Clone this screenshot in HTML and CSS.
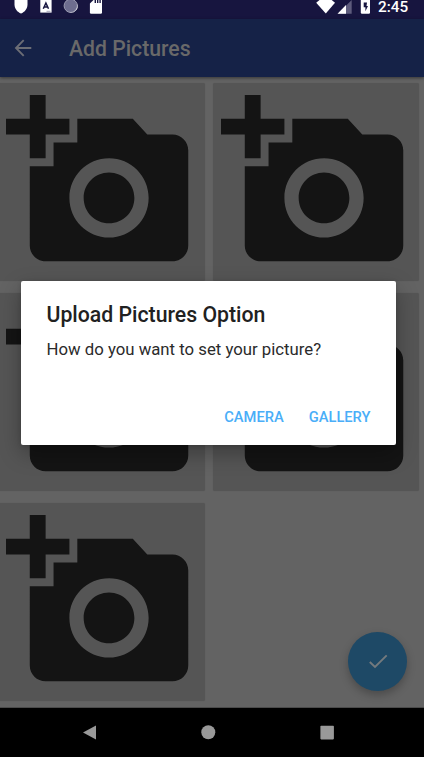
FILE: index.html
```html
<!DOCTYPE html>
<html lang="en">
<head>
<meta charset="utf-8">
<title>Add Pictures</title>
<link rel="stylesheet" href="styles.css">
</head>
<body>
<svg class="defs" aria-hidden="true">
  <symbol id="add-photo" viewBox="0 0 24 24"><path d="M3 4V1h2v3h3v2H5v3H3V6H0V4h3zm3 6V7h3V4h7l1.83 2H21c1.1 0 2 .9 2 2v12c0 1.1-.9 2-2 2H5c-1.1 0-2-.9-2-2V10h3zm7 9c2.76 0 5-2.24 5-5s-2.24-5-5-5-5 2.24-5 5 2.24 5 5 5zm-3.2-5c0 1.77 1.43 3.2 3.2 3.2s3.2-1.43 3.2-3.2-1.43-3.2-3.2-3.2-3.2 1.43-3.2 3.2z"/></symbol>
</svg>
<div class="screen">
  <div class="status">
    <svg width="110" height="19" viewBox="0 0 110 19">
      <path fill="#fff" d="M14.500 0h13v4.500c0 4.200-2.800 7.600-6.500 9-3.700-1.400-6.500-4.800-6.500-9z"/>
      <path fill="#fff" d="M40.300 0h11.300v12.600H40.300z"/>
      <path fill="none" stroke="#17153f" stroke-width="1.500" d="M43.300 8.800 45.900 3l2.600 5.800M44.200 7h3.400"/>
      <path stroke="#8d8ca5" stroke-width=".8" d="M46.500 11.300h4"/>
      <circle cx="70.700" cy="5.800" r="6.600" fill="#6d6d8e" stroke="#9c9cb2"/>
      <path fill="#e6e6ec" d="M77.500 3.500a7.200 7.200 0 0 1-8.500 9.200A8 8 0 0 0 77.500 3.500z"/>
      <path fill="#fff" d="M93.500 0H102v12.500q0 1.300-1.300 1.300H91.200q-1.300 0-1.300-1.300V3.500z"/>
      <path fill="#17153f" d="M94.600 0h1.400v3h-1.400zM97 0h1.400v3H97zM99.400 0h1.400v3h-1.400z"/>
    </svg>
    <div class="status-right">
      <svg width="56" height="19" viewBox="0 0 56 19">
        <path fill="#fff" d="M.2 2.800 3.500 0h12.200L19 2.800 9.800 13.500z"/>
        <path fill="#5d5b7c" d="M35.700 0v13.700H22L35.700 0z"/>
        <path fill="#fff" d="M30 5v8.700h-8.500z"/>
        <path fill="#fff" d="M44.800 0H54v12.500q0 1.200-1.200 1.200H46q-1.200 0-1.200-1.200z"/>
        <path fill="#17153f" d="M51 2.500h-3.300v4.700h1.700v4L52 6h-1.500z"/>
      </svg>
      <span class="clock">2:45</span>
    </div>
  </div>
  <header class="bar">
    <svg width="24" height="24" viewBox="0 0 24 24"><path fill="none" stroke="#6b6d75" stroke-width="1.900" d="M20.300 12H5M12.700 4.200 5 12l7.700 7.800"/></svg>
    <h1>Add Pictures</h1>
  </header>
  <main class="grid">
    <div class="card"><svg class="photo"><use href="#add-photo"/></svg></div>
    <div class="card"><svg class="photo"><use href="#add-photo"/></svg></div>
    <div class="card"><svg class="photo"><use href="#add-photo"/></svg></div>
    <div class="card"><svg class="photo"><use href="#add-photo"/></svg></div>
    <div class="card"><svg class="photo"><use href="#add-photo"/></svg></div>
  </main>
  <nav class="nav">
    <svg width="424" height="49" viewBox="0 0 424 49">
      <path fill="#999" d="M96 17.500v14L83 24.500z"/>
      <circle cx="208.300" cy="24.300" r="7" fill="#999"/>
      <rect x="320.400" y="17.800" width="13.500" height="13.600" rx=".8" fill="#999"/>
    </svg>
  </nav>
  <div class="fab"><svg width="24" height="24" viewBox="0 0 24 24"><path fill="none" stroke="#747a7e" stroke-width="1.900" d="M3.800 13 9 18 20.700 6.300"/></svg></div>
  <section class="dialog">
    <h2>Upload Pictures Option</h2>
    <p>How do you want to set your picture?</p>
    <div class="actions"><span>CAMERA</span><span>GALLERY</span></div>
  </section>
</div>
</body>
</html>
```
FILE: styles.css
```css
* { box-sizing: border-box; }
body { margin: 0; font-family: Roboto, sans-serif; background: #636363; }
h1, h2, p { margin: 0; white-space: nowrap; }
svg { display: block; }
.defs { position: absolute; width: 0; height: 0; }
.screen {
  position: relative;
  display: flex;
  flex-direction: column;
  width: 424px;
  height: 757px;
  overflow: hidden;
  background: #636363;
}
.status {
  display: flex;
  justify-content: space-between;
  height: 19px;
  background: #17153f;
}
.status-right { display: flex; padding-right: 15px; gap: 6px; }
.status-right svg { flex: none; }
.clock { font-size: 15.300px; font-weight: 500; line-height: 14px; color: #fff; width: 31px; height: 17px; white-space: nowrap; }
.bar {
  display: flex;
  align-items: center;
  height: 58px;
  flex: none;
  padding-left: 11px;
  background: #152247;
  box-shadow: 0 1px 3px rgba(0, 0, 0, .45);
}
.bar h1 { margin-left: 34px; padding-top: 2px; font-size: 21.200px; font-weight: 500; line-height: 28px; color: #696969; }
.grid {
  display: grid;
  grid-template-columns: 206.700px 206.700px;
  grid-auto-rows: 198px;
  gap: 12px 8.300px;
  align-content: start;
  flex: 1;
  margin-left: -2.200px;
  padding-top: 6px;
}
.card { padding: 4.200px 8.200px; border-radius: 2px; background: #555; box-shadow: 0 0 1px rgba(0, 0, 0, .2); }
.photo { width: 190.200px; height: 190.200px; fill: #141414; }
.nav { height: 49px; flex: none; background: #000; box-shadow: 0 -1px 0 #4a4a4a; }
.fab {
  position: absolute;
  left: 348.200px;
  top: 632px;
  display: flex;
  align-items: center;
  justify-content: center;
  width: 58.700px;
  height: 58.700px;
  border-radius: 50%;
  background: #1e4966;
  box-shadow: 0 4px 8px rgba(0, 0, 0, .25);
}
.dialog {
  position: absolute;
  left: 21.300px;
  top: 280.500px;
  width: 374.700px;
  height: 164.500px;
  padding: 20.500px 25.500px 0 25.200px;
  border-radius: 2px;
  background: #fff;
  box-shadow: 0 8px 22px rgba(0, 0, 0, .3), 0 1px 4px rgba(0, 0, 0, .15);
}
.dialog h2 { font-size: 21.250px; font-weight: 500; line-height: 28px; color: #212121; }
.dialog p { margin-top: 8px; font-size: 16.750px; line-height: 24px; color: #2b2b2b; }
.actions { display: flex; justify-content: flex-end; gap: 25px; margin-top: 45.500px; font-size: 14.700px; font-weight: 500; line-height: 20px; color: #4aaef8; }
```
